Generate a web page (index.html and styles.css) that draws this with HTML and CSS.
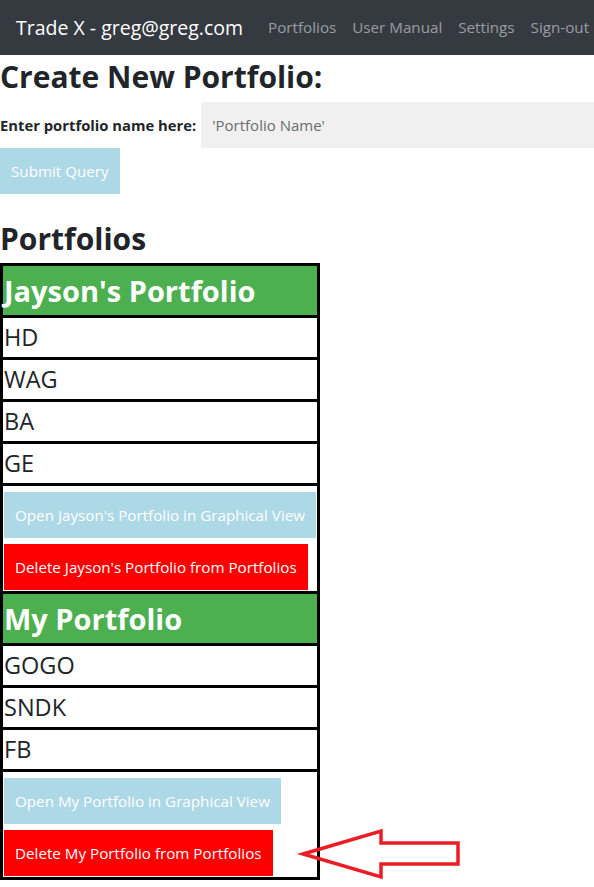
FILE: index.html
```html
<!DOCTYPE html>
<html lang="en">
<head>
<meta charset="utf-8">
<title>Trade X - Portfolios</title>
<link rel="stylesheet" href="styles.css">
</head>
<body>
<nav class="navbar">
  <span class="brand">Trade X - greg@greg.com</span>
  <ul class="nav-links">
    <li><a href="#">Portfolios</a></li>
    <li><a href="#">User Manual</a></li>
    <li><a href="#">Settings</a></li>
    <li><a href="#">Sign-out</a></li>
  </ul>
</nav>
<main class="content">
  <h2 class="page-title">Create New Portfolio:</h2>
  <form class="create-form">
    <div class="field-row">
      <label class="field-label" for="pname">Enter portfolio name here:</label>
      <input class="field-input" id="pname" type="text" value="'Portfolio Name'">
    </div>
    <button class="btn btn-blue" type="button">Submit Query</button>
  </form>
  <h2 class="section-title">Portfolios</h2>
  <table class="portfolio-table">
    <tr><th class="pf-head">Jayson's Portfolio</th></tr>
    <tr><td class="ticker">HD</td></tr>
    <tr><td class="ticker">WAG</td></tr>
    <tr><td class="ticker">BA</td></tr>
    <tr><td class="ticker">GE</td></tr>
    <tr><td class="actions">
      <button class="btn btn-blue btn-sm" type="button">Open Jayson's Portfolio in Graphical View</button>
      <button class="btn btn-red btn-sm" type="button">Delete Jayson's Portfolio from Portfolios</button>
    </td></tr>
    <tr><th class="pf-head">My Portfolio</th></tr>
    <tr><td class="ticker">GOGO</td></tr>
    <tr><td class="ticker">SNDK</td></tr>
    <tr><td class="ticker">FB</td></tr>
    <tr><td class="actions annotated">
      <button class="btn btn-blue btn-sm" type="button">Open My Portfolio in Graphical View</button>
      <button class="btn btn-red btn-sm" type="button">Delete My Portfolio from Portfolios</button>
      <svg class="arrow" width="170" height="56" viewBox="0 0 170 56" aria-hidden="true">
        <polygon points="3,26 81,3 81,15 158,15 158,36 81,36 81,49" fill="none" stroke="#ed1c24" stroke-width="3.5" stroke-linejoin="miter"/>
      </svg>
    </td></tr>
  </table>
</main>
</body>
</html>
```

FILE: styles.css
```css
* { box-sizing: border-box; }

html, body {
  margin: 0;
  padding: 0;
  background: #fff;
}

body {
  font-family: "Open Sans", "Noto Sans", "Liberation Sans", sans-serif;
  color: #212529;
  font-size: 16px;
  line-height: 1.5;
}

.navbar {
  display: flex;
  align-items: center;
  height: 55px;
  background: #343a40;
  padding: 0 0 0 16px;
  white-space: nowrap;
  overflow: hidden;
}

.brand {
  color: #fff;
  font-size: 19.5px;
  margin-right: 17px;
}

.nav-links {
  display: flex;
  list-style: none;
  margin: 0;
  padding: 0;
}

.nav-links a {
  display: block;
  padding: 8px 8px;
  color: rgba(255, 255, 255, 0.5);
  text-decoration: none;
  font-size: 15.2px;
}

.page-title,
.section-title {
  margin: 0;
  font-size: 30px;
  font-weight: 700;
  line-height: 1.2;
}

.page-title {
  padding-top: 4px;
  margin-bottom: 7px;
}

.section-title {
  margin-top: 27px;
  margin-bottom: 6px;
}

.create-form {
  display: flex;
  flex-direction: column;
  align-items: flex-start;
}

.field-row {
  display: flex;
  align-items: center;
  gap: 5px;
  width: 100%;
}

.field-label {
  font-weight: 700;
  font-size: 14.8px;
}

.field-input {
  flex: 1;
  height: 46px;
  border: none;
  background: #f0f0f0;
  color: #6c6c6c;
  font-family: inherit;
  font-size: 15px;
  padding: 0 11px;
  outline: none;
}

.btn {
  border: none;
  font-family: inherit;
  color: #fff;
  cursor: pointer;
  font-size: 15.2px;
  line-height: 22px;
  padding: 12px 11px;
  white-space: nowrap;
}

.btn-blue { background: #add8e6; }
.btn-red { background: #ff0000; }

.portfolio-table {
  border-collapse: collapse;
  border: 3px solid #000;
  width: 320px;
}

.portfolio-table th,
.portfolio-table td {
  border: 3px solid #000;
  padding: 1px;
  text-align: left;
}

.pf-head {
  background: #4caf50;
  color: #fff;
  font-size: 29px;
  font-weight: 700;
  line-height: 47px;
}

.ticker {
  font-size: 23.5px;
  line-height: 37px;
}

.portfolio-table .actions {
  padding-top: 6px;
}

.actions .btn {
  display: block;
  margin-bottom: 6px;
}

.actions .btn:last-of-type {
  margin-bottom: 0;
}

.annotated {
  position: relative;
}

.arrow {
  position: absolute;
  left: 297px;
  top: 56px;
  overflow: visible;
}
```
